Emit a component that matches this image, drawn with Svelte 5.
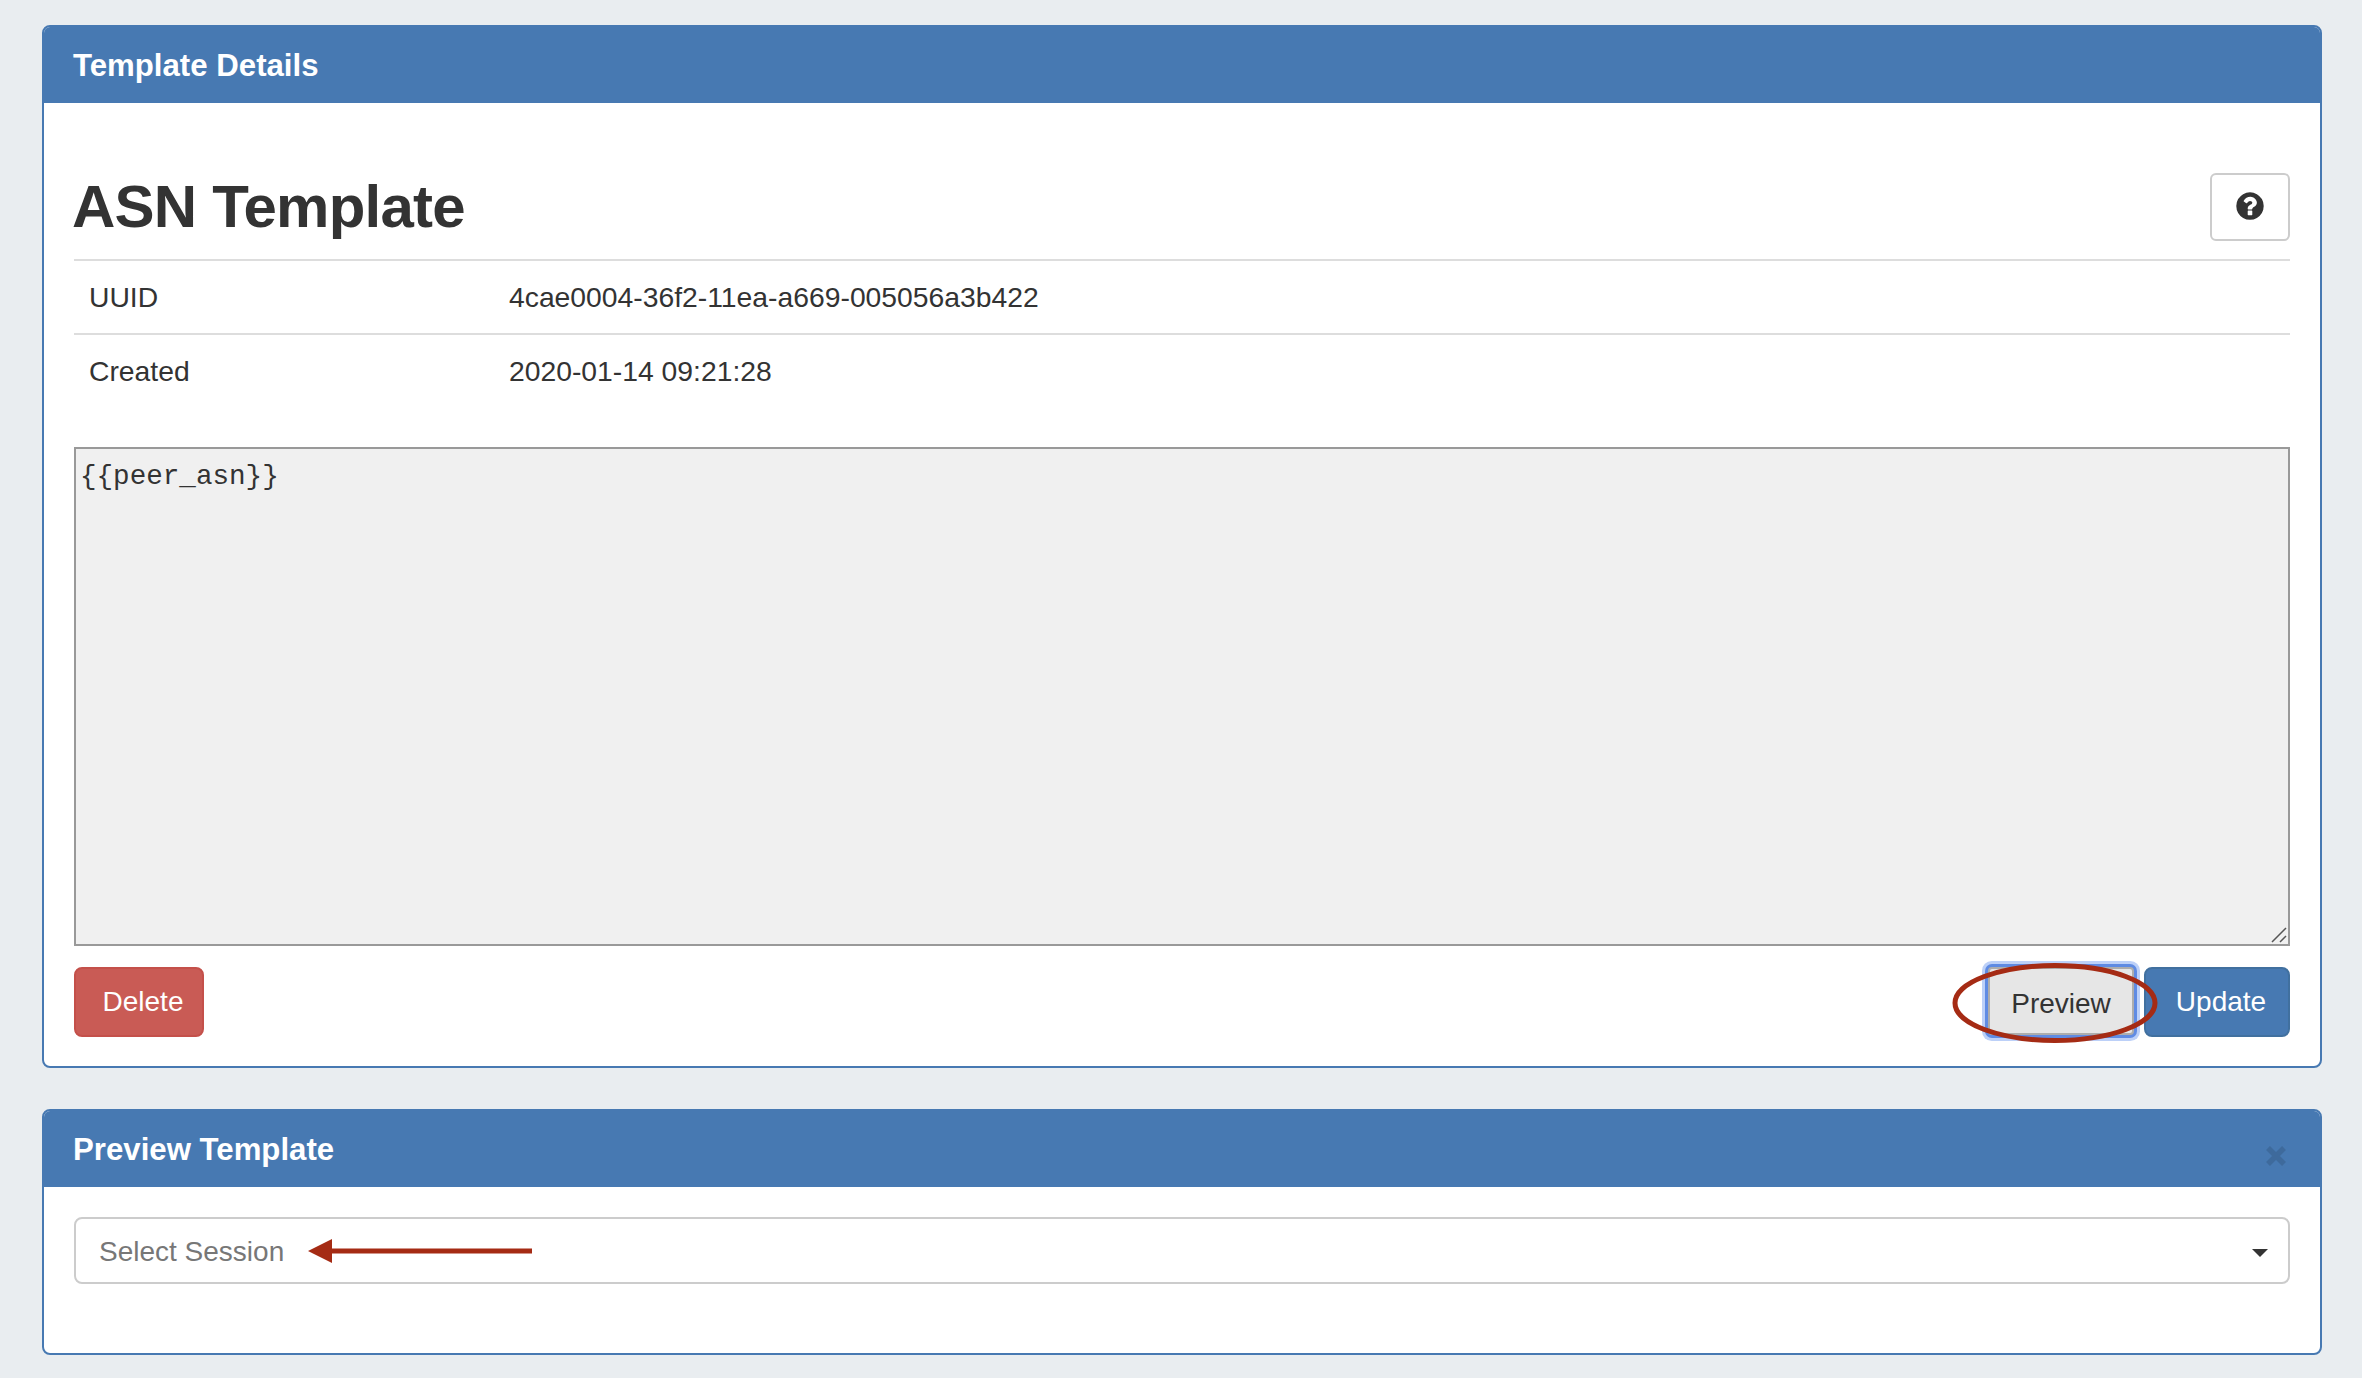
<script>
    const details = [
        { label: 'UUID', value: '4cae0004-36f2-11ea-a669-005056a3b422' },
        { label: 'Created', value: '2020-01-14 09:21:28' }
    ];
    let template = $state('{{peer_asn}}');
</script>

<main class="page">
    <section class="panel first">
        <header class="panel-head">Template Details</header>
        <div class="panel-body">
            <div class="title-row">
                <h1>ASN Template</h1>
                <button class="help" aria-label="Help">
                    <svg viewBox="0 0 1792 1792" width="32" height="32">
                        <path fill="#333" d="M1024 1376v-192q0-14-9-23t-23-9h-192q-14 0-23 9t-9 23v192q0 14 9 23t23 9h192q14 0 23-9t9-23zm256-672q0-88-55.5-163t-138.5-116-170-41q-243 0-371 213-15 24 8 42l132 100q7 6 19 6 16 0 25-12 53-68 86-92 34-24 86-24 48 0 85.5 26t37.5 59q0 38-20 61t-68 45q-63 28-115.5 86.5t-52.5 125.5v36q0 14 9 23t23 9h192q14 0 23-9t9-23q0-19 21.5-49.5t54.5-49.5q32-18 49-28.5t46-35 44.5-48 28-60.5 12.5-81zm384 192q0 209-103 385.5t-279.5 279.5-385.5 103-385.5-103-279.5-279.5-103-385.5 103-385.5 279.5-279.5 385.5-103 385.5 103 279.5 279.5 103 385.5z"/>
                    </svg>
                </button>
            </div>

            <div class="details">
                {#each details as row}
                    <div class="detail-row">
                        <span>{row.label}</span>
                        <span>{row.value}</span>
                    </div>
                {/each}
            </div>

            <div class="code-wrap">
                <textarea class="code" readonly bind:value={template}></textarea>
                <svg class="grip" width="16" height="16" viewBox="0 0 16 16">
                    <path d="M1 15 15 1M9 15 15 9" stroke="#555" stroke-width="1.500" fill="none"/>
                </svg>
            </div>

            <div class="actions">
                <button class="btn danger">Delete</button>
                <div class="actions-right">
                    <div class="preview-wrap">
                        <button class="btn preview">Preview</button>
                        <svg class="ellipse" width="206" height="80" viewBox="0 0 206 80">
                            <ellipse cx="103" cy="40" rx="100" ry="37.500" fill="none" stroke="#a52b14" stroke-width="5"/>
                        </svg>
                    </div>
                    <button class="btn primary">Update</button>
                </div>
            </div>
        </div>
    </section>

    <section class="panel second">
        <header class="panel-head">
            Preview Template
            <svg class="close" width="22" height="22" viewBox="0 0 22 22">
                <path d="M3 3 19 19M19 3 3 19" stroke="#3e6a9c" stroke-width="5.500" fill="none"/>
            </svg>
        </header>
        <div class="panel-body">
            <div class="select">
                <span class="placeholder">Select Session</span>
                <svg class="arrow" width="225" height="26" viewBox="0 0 225 26">
                    <path d="M0 13 24 1V10.500H224V15.500H24V25Z" fill="#a52b14"/>
                </svg>
                <span class="caret"></span>
            </div>
        </div>
    </section>
</main>

<style>
    :global(body) {
        margin: 0;
        background: #e9edf0;
    }

    .page {
        box-sizing: border-box;
        height: 1378px;
        padding: 25px 40px 23px 42px;
        display: flex;
        flex-direction: column;
        gap: 41px;
        font-family: "Liberation Sans", Arial, sans-serif;
        font-size: 28.3px;
        color: #333;
    }

    .panel {
        box-sizing: border-box;
        background: #fff;
        border: 2px solid #4779b2;
        border-radius: 8px;
        overflow: hidden;
    }

    .panel.first {
        height: 1043px;
    }

    .panel.second {
        height: 246px;
    }

    .panel-head {
        position: relative;
        box-sizing: border-box;
        height: 78px;
        margin-top: -2px;
        padding: 3px 29px 0;
        display: flex;
        align-items: center;
        background: #4779b2;
        color: #fff;
        font-size: 31.2px;
        font-weight: 700;
    }

    .close {
        position: absolute;
        right: 33px;
        top: 36px;
    }

    .panel-body {
        padding: 0 30px;
    }

    .title-row {
        box-sizing: border-box;
        display: flex;
        justify-content: space-between;
        align-items: center;
        height: 156px;
        padding: 70px 0 18px;
    }

    h1 {
        margin: 0 0 0 -2px;
        font-size: 60px;
        font-weight: 700;
        letter-spacing: -0.8px;
        line-height: 1;
    }

    .help {
        width: 80px;
        height: 68px;
        box-sizing: border-box;
        background: #fff;
        border: 2px solid #ccc;
        border-radius: 6px;
        padding: 0 0 3px;
        display: flex;
        align-items: center;
        justify-content: center;
    }

    .details {
        display: flex;
        flex-direction: column;
    }

    .detail-row {
        display: grid;
        grid-template-columns: 420px 1fr;
        height: 74px;
        box-sizing: border-box;
        border-top: 2px solid #ddd;
        padding: 0 0 0 15px;
        align-items: center;
    }

    .code-wrap {
        position: relative;
        margin-top: 40px;
    }

    .code {
        display: block;
        box-sizing: border-box;
        width: 100%;
        height: 499px;
        padding: 12px 4px;
        background: #f0f0f0;
        border: 2px solid #999;
        outline: none;
        resize: none;
        color: #333;
        font-family: "Liberation Mono", "Courier New", monospace;
        font-size: 27.6px;
        line-height: 32px;
    }

    .grip {
        position: absolute;
        right: 3px;
        bottom: 3px;
    }

    .actions {
        display: flex;
        justify-content: space-between;
        margin-top: 21px;
    }

    .actions-right {
        display: flex;
        gap: 6px;
    }

    .btn {
        box-sizing: border-box;
        height: 70px;
        border-radius: 8px;
        border: 2px solid transparent;
        font-family: inherit;
        font-size: 28px;
        padding: 0;
    }

    .danger {
        width: 130px;
        background: #c95b55;
        border-color: #c4504a;
        color: #fff;
        padding-left: 8px;
    }

    .primary {
        width: 146px;
        background: #4779b2;
        border-color: #41709f;
        color: #fff;
        padding-left: 8px;
    }

    .preview-wrap {
        position: relative;
        display: flex;
        margin-left: 6px;
    }

    .preview {
        width: 146px;
        height: 68px;
        margin-right: 4px;
        padding: 6px 0 0;
        background: #e6e6e6;
        border-color: #adadad;
        border-radius: 4px;
        color: #333;
        box-shadow: 0 0 0 3px #5f8be3, 0 0 0 6px #bcd0f8;
    }

    .ellipse {
        position: absolute;
        left: -36px;
        top: -4px;
        pointer-events: none;
    }

    .select {
        position: relative;
        box-sizing: border-box;
        height: 67px;
        margin-top: 30px;
        padding: 2px 23px 0;
        display: flex;
        align-items: center;
        background: #fff;
        border: 2px solid #ccc;
        border-radius: 8px;
        font-size: 28px;
    }

    .placeholder {
        color: #777;
    }

    .arrow {
        position: absolute;
        left: 232px;
        top: 19px;
    }

    .caret {
        position: absolute;
        right: 20px;
        top: 30px;
        border-top: 8px solid #333;
        border-left: 8px solid transparent;
        border-right: 8px solid transparent;
    }
</style>
